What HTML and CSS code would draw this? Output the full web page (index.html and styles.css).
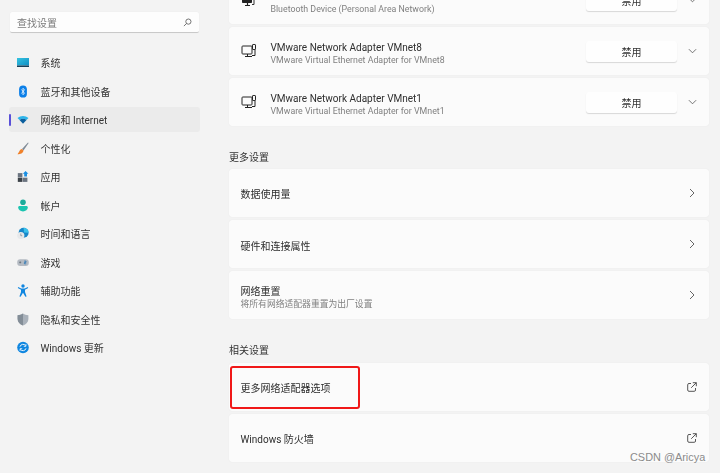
FILE: index.html
```html
<!DOCTYPE html>
<html lang="zh-CN">
<head>
<meta charset="utf-8">
<title>网络和 Internet</title>
<link rel="stylesheet" href="styles.css">
</head>
<body>
<div class="app">
  <aside class="sidebar">
    <div class="search">
      <span>查找设置</span>
      <svg class="search-icon" viewBox="0 0 10 10"><circle cx="6" cy="4" r="2.9"/><path d="M3.9 6.1 1 9"/></svg>
    </div>
    <nav class="nav">
      <a class="nav-item"><svg class="nav-icon" viewBox="0 0 12 13"><defs><linearGradient id="g1" x1="0" y1="0" x2="1" y2="1"><stop offset="0" stop-color="#35c3e0"/><stop offset="1" stop-color="#0f8ec4"/></linearGradient></defs><rect y="2" width="12" height="7.5" fill="url(#g1)"/><rect y="9.5" width="12" height="1.5" fill="#163f58"/></svg><span>系统</span></a>
      <a class="nav-item"><svg class="nav-icon" viewBox="0 0 12 14"><rect x="1.8" y="0.5" width="8.4" height="13" rx="4.2" fill="#0b7fe8"/><path d="M4.3 4.8 7.6 8.8 6 10.5V3.5L7.6 5.2 4.3 9.2" fill="none" stroke="#fff" stroke-width=".8"/></svg><span>蓝牙和其他设备</span></a>
      <a class="nav-item active"><svg class="nav-icon" viewBox="0 0 12 13"><path d="M0.5 5 C3.6 2.2 8.4 2.2 11.5 5L9.5 7.1C7.5 5.4 4.5 5.4 2.5 7.1Z" fill="#2cb4ea"/><path d="M2.5 7.1C4.5 5.4 7.5 5.4 9.5 7.1L6 10.8Z" fill="#0b5f9e"/></svg><span>网络和 Internet</span></a>
      <a class="nav-item"><svg class="nav-icon" viewBox="0 0 12 13"><path d="M11 .5 5 7 6.5 8.4 11.6 1Z" fill="#7f8a96"/><path d="M4.8 7C3 7.2 2.6 9 1.8 10.2 1.4 10.9 .8 11.6.5 12.2 3 12.3 6 11.4 6.5 8.5Z" fill="#f0812a"/></svg><span>个性化</span></a>
      <a class="nav-item"><svg class="nav-icon" viewBox="0 0 12 12"><rect x=".8" y="2.6" width="4.6" height="4.2" fill="#6b7480"/><rect x=".8" y="7.2" width="4.6" height="4.2" fill="#3b4148"/><rect x="5.8" y="7.2" width="4.6" height="4.2" fill="#6b7480"/><path d="M8.6.4 11.4 3.2 10 3.2V6H7.2V3.2H5.8Z" fill="#1a8fe3"/></svg><span>应用</span></a>
      <a class="nav-item"><svg class="nav-icon" viewBox="0 0 12 13"><circle cx="6" cy="3.2" r="2.8" fill="#1bab9b"/><path d="M1.2 8.6C1.2 7.4 2 7 3 7H9C10 7 10.8 7.4 10.8 8.6 10.8 11 8.6 12.4 6 12.4S1.2 11 1.2 8.6Z" fill="#1bc4b0"/></svg><span>帐户</span></a>
      <a class="nav-item"><svg class="nav-icon" viewBox="0 0 12 12"><circle cx="6.6" cy="5.2" r="5" fill="#1787c9"/><path d="M6.6 .2A5 5 0 0 1 11.6 5.2L7 5Z" fill="#38c0ea"/><circle cx="3.8" cy="8" r="3.6" fill="#e6e8ea"/><path d="M3.8 6v2.2h1.4" fill="none" stroke="#6b7480" stroke-width=".6"/></svg><span>时间和语言</span></a>
      <a class="nav-item"><svg class="nav-icon" viewBox="0 0 12 12"><rect x=".2" y="2.8" width="11.6" height="6.6" rx="3" fill="#b4bac2"/><path d="M2.2 5.9h2M3.2 4.9v2" stroke="#5f6872" stroke-width=".7"/><path d="M7.2 4.6h1.8v1.3H7.4v1.4h1.8" fill="none" stroke="#1a6fb5" stroke-width=".7"/></svg><span>游戏</span></a>
      <a class="nav-item"><svg class="nav-icon" viewBox="0 0 12 13"><circle cx="6" cy="2" r="1.7" fill="#0f86e0"/><path d="M1.2 3 4.2 4.4H7.8L10.8 3 11.2 4 8 5.8V8L9.6 12.4 8.4 12.8 6 8.8 3.6 12.8 2.4 12.4 4 8V5.8L.8 4Z" fill="#0f86e0"/></svg><span>辅助功能</span></a>
      <a class="nav-item"><svg class="nav-icon" viewBox="0 0 12 13"><path d="M6 .6C7.6 1.8 9.4 2.2 11.4 2.2V6C11.4 9.2 9 11.4 6 12.6 3 11.4.6 9.2.6 6V2.2C2.6 2.2 4.4 1.8 6 .6Z" fill="#a9b1ba"/><path d="M6 .6V12.6C3 11.4.6 9.2.6 6V2.2C2.6 2.2 4.4 1.8 6 .6Z" fill="#838d97"/></svg><span>隐私和安全性</span></a>
      <a class="nav-item"><svg class="nav-icon" viewBox="0 0 12 12"><circle cx="6" cy="6" r="5.8" fill="#0f86e0"/><path d="M3 5.2A3.1 3.1 0 0 1 8.6 4.2M9 6.8A3.1 3.1 0 0 1 3.4 7.8" fill="none" stroke="#fff" stroke-width=".9"/><path d="M8.9 2.6V4.8H6.8M3.1 9.4V7.2H5.2" fill="none" stroke="#fff" stroke-width=".8"/></svg><span>Windows 更新</span></a>
    </nav>
  </aside>
  <main class="main">
    <div class="group group-first">
      <div class="card">
        <svg class="dev-icon" viewBox="0 0 16 16"><rect x="1" y="3" width="10" height="8" rx=".8" fill="#222"/><path d="M4 13.5h5M6.5 11v2.5" stroke="#222" stroke-width="1.2"/><rect x="11.5" y="1.5" width="3" height="5" rx=".6" fill="none" stroke="#333"/><path d="M13 6.5V12.5H11" fill="none" stroke="#333"/></svg>
        <div class="text"><div class="title">Bluetooth Device</div><div class="sub">Bluetooth Device (Personal Area Network)</div></div>
        <button class="btn">禁用</button>
        <span class="slot"><svg class="chev" viewBox="0 0 10 6"><path d="M1 1 5 5 9 1"/></svg></span>
      </div>
      <div class="card">
        <svg class="dev-icon" viewBox="0 0 16 16"><rect x="1" y="3" width="10" height="8" rx=".8" fill="none" stroke="#222"/><path d="M4 13.5h7M6.5 11v2.5" stroke="#222"/><rect x="11.5" y="1.5" width="3" height="5" rx=".6" fill="none" stroke="#222"/><path d="M14 6.5V12.5H11" fill="none" stroke="#222"/></svg>
        <div class="text"><div class="title">VMware Network Adapter VMnet8</div><div class="sub">VMware Virtual Ethernet Adapter for VMnet8</div></div>
        <button class="btn">禁用</button>
        <span class="slot"><svg class="chev" viewBox="0 0 10 6"><path d="M1 1 5 5 9 1"/></svg></span>
      </div>
      <div class="card">
        <svg class="dev-icon" viewBox="0 0 16 16"><rect x="1" y="3" width="10" height="8" rx=".8" fill="none" stroke="#222"/><path d="M4 13.5h7M6.5 11v2.5" stroke="#222"/><rect x="11.5" y="1.5" width="3" height="5" rx=".6" fill="none" stroke="#222"/><path d="M14 6.5V12.5H11" fill="none" stroke="#222"/></svg>
        <div class="text"><div class="title">VMware Network Adapter VMnet1</div><div class="sub">VMware Virtual Ethernet Adapter for VMnet1</div></div>
        <button class="btn">禁用</button>
        <span class="slot"><svg class="chev" viewBox="0 0 10 6"><path d="M1 1 5 5 9 1"/></svg></span>
      </div>
    </div>
    <h2 class="heading heading-more">更多设置</h2>
    <div class="group">
      <div class="card">
        <div class="text"><div class="title">数据使用量</div></div>
        <span class="slot"><svg class="chev-r" viewBox="0 0 6 10"><path d="M1 1 5 5 1 9"/></svg></span>
      </div>
      <div class="card">
        <div class="text"><div class="title">硬件和连接属性</div></div>
        <span class="slot"><svg class="chev-r" viewBox="0 0 6 10"><path d="M1 1 5 5 1 9"/></svg></span>
      </div>
      <div class="card">
        <div class="text"><div class="title">网络重置</div><div class="sub">将所有网络适配器重置为出厂设置</div></div>
        <span class="slot"><svg class="chev-r" viewBox="0 0 6 10"><path d="M1 1 5 5 1 9"/></svg></span>
      </div>
    </div>
    <h2 class="heading heading-related">相关设置</h2>
    <div class="group">
      <div class="card">
        <div class="text"><div class="title">更多网络适配器选项</div></div>
        <span class="slot"><svg class="open" viewBox="0 0 10 10"><path d="M4 1.5H2A1.3 1.3 0 0 0 .7 2.8V8A1.3 1.3 0 0 0 2 9.3H7.2A1.3 1.3 0 0 0 8.5 8V6M5.8.7H9.3V4.2M9.3.7 4.2 5.8"/></svg></span>
        <div class="marker"></div>
      </div>
      <div class="card">
        <div class="text"><div class="title">Windows 防火墙</div></div>
        <span class="slot"><svg class="open" viewBox="0 0 10 10"><path d="M4 1.5H2A1.3 1.3 0 0 0 .7 2.8V8A1.3 1.3 0 0 0 2 9.3H7.2A1.3 1.3 0 0 0 8.5 8V6M5.8.7H9.3V4.2M9.3.7 4.2 5.8"/></svg></span>
      </div>
    </div>
  </main>
</div>
<div class="watermark">CSDN @Aricya</div>
</body>
</html>
```
FILE: styles.css
```css
* { box-sizing: border-box; }
html, body { margin: 0; height: 100%; }
body {
  background: #f3f3f3;
  overflow: hidden;
  font-family: Roboto, "Noto Sans CJK SC", sans-serif;
  color: #333;
  position: relative;
}
.app { display: flex; height: 473px; overflow: hidden; filter: blur(.35px); }
.sidebar { width: 229px; flex: none; padding: 12px 29px 0 9px; }
.search {
  height: 21px;
  margin: 0 1px 17.3px;
  background: #fdfdfd;
  border-radius: 2px;
  border-bottom: 1px solid #c9c9c9;
  box-shadow: 0 0 1px rgba(0,0,0,.08);
  display: flex;
  align-items: center;
  justify-content: space-between;
  padding: 0 7px;
  font-size: 10px;
  color: #7a7a7a;
}
.search-icon { width: 9px; height: 9px; fill: none; stroke: #555; stroke-width: .9; }
.nav { display: flex; flex-direction: column; gap: 3.5px; }
.nav-item {
  height: 25px;
  display: flex;
  align-items: center;
  gap: 11.5px;
  padding-left: 8px;
  border-radius: 3px;
  font-size: 10px;
  position: relative;
  color: #333;
}
.nav-item.active { background: #ebebeb; }
.nav-item.active::before {
  content: "";
  position: absolute;
  left: 0;
  top: 7px;
  width: 2px;
  height: 12px;
  border-radius: 1px;
  background: #5a50d8;
}
.nav-icon { width: 12px; height: 13px; flex: none; }
.main { width: 480px; flex: none; }
.group { display: flex; flex-direction: column; gap: 3.2px; }
.group-first { margin-top: -24px; }
.card {
  height: 48px;
  flex: none;
  background: #fbfbfb;
  border-radius: 3px;
  box-shadow: 0 0 1px rgba(0,0,0,.1);
  display: flex;
  align-items: center;
  padding-left: 11.5px;
  position: relative;
}
.dev-icon { width: 16px; height: 16px; flex: none; margin-right: 14px; }
.text { flex: 1; min-width: 0; padding-top: 4px; }
.title { font-size: 10px; line-height: 13px; color: #2e2e2e; white-space: nowrap; }
.sub { font-size: 8.8px; line-height: 12px; color: #808080; white-space: nowrap; }
.btn {
  width: 91px;
  height: 21px;
  flex: none;
  border: 0;
  border-radius: 3px;
  background: #fefefe;
  box-shadow: 0 1px 1px rgba(0,0,0,.14);
  font: inherit;
  font-size: 10px;
  color: #333;
  padding: 0;
}
.slot { width: 32px; flex: none; display: flex; justify-content: center; align-items: center; padding-right: 2px; }
.chev { width: 9px; height: 6px; fill: none; stroke: #555; stroke-width: .9; }
.chev-r { width: 6px; height: 10px; fill: none; stroke: #555; stroke-width: .9; }
.open { width: 10px; height: 10px; fill: none; stroke: #444; stroke-width: .9; }
.heading { margin: 0; font-size: 10px; line-height: 14px; font-weight: 400; color: #333; }
.heading-more { margin: 24.2px 0 4.4px; }
.heading-related { margin: 24.4px 0 5px; }
.marker {
  position: absolute;
  left: 0.5px;
  top: 3px;
  width: 130px;
  height: 43px;
  border: 2px solid #f01818;
  border-radius: 3px;
}
.watermark {
  position: absolute;
  left: 630px;
  top: 450px;
  font-family: "Liberation Sans", sans-serif;
  font-size: 10.9px;
  line-height: 14px;
  color: #8b8b8b;
  white-space: nowrap;
}
```
